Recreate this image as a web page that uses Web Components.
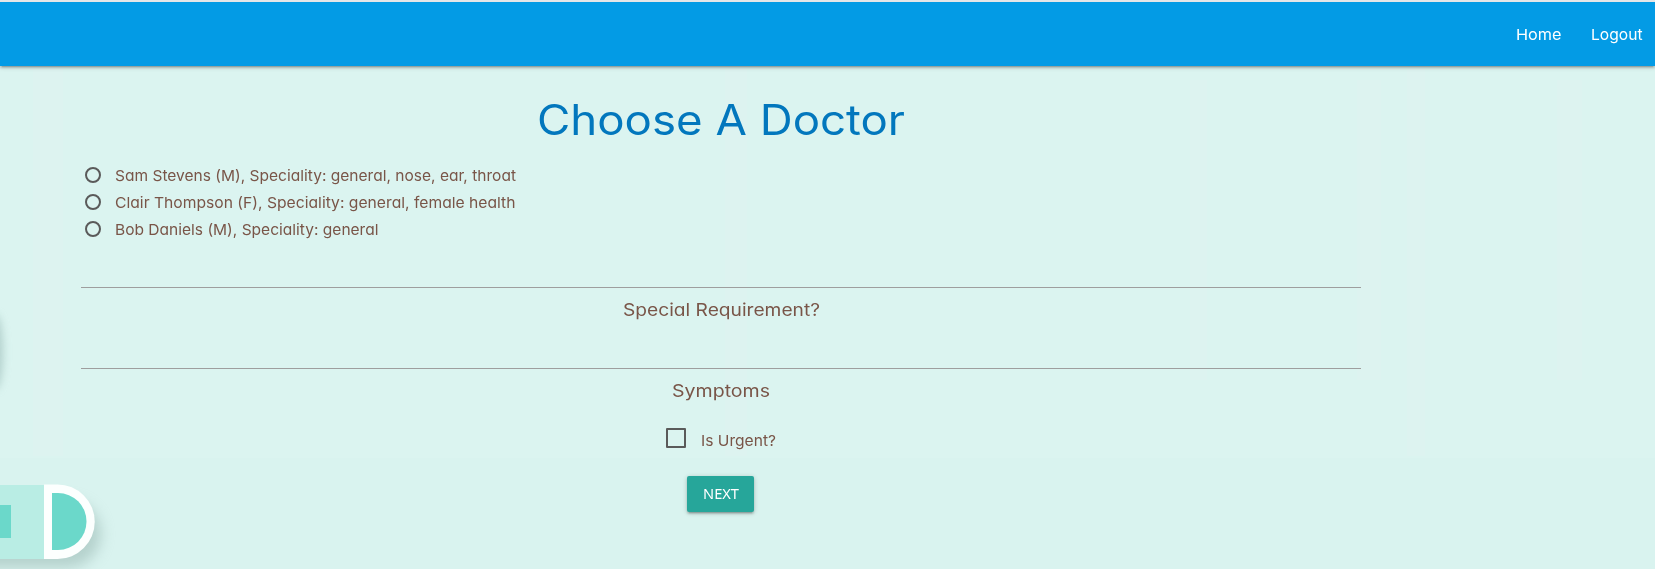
<!DOCTYPE html>
<html lang="en"><head><meta charset="utf-8"><title>Choose A Doctor</title>
<style>html,body{margin:0;height:100%;overflow:hidden}</style></head><body>
<doctor-page></doctor-page>
<script>
const define=(name,html,init)=>customElements.define(name,class extends HTMLElement{
  connectedCallback(){if(this.shadowRoot)return;this.attachShadow({mode:'open'}).innerHTML=html;if(init)init.call(this,this.shadowRoot);}
});
// Text stretched to fill the advance width given in its "w" attribute.
define('wide-text',`<style>:host{display:inline-block;white-space:nowrap;text-align:left}span{display:inline-block;transform-origin:0 50%}</style><span></span>`,function(r){
  const s=r.querySelector('span');s.textContent=this.getAttribute('text');
  const w=+this.getAttribute('w'),n=s.getBoundingClientRect().width;
  this.style.width=w+'px';
  s.style.transform='scaleX('+w/n+')';
});
define('nav-bar',`<style>:host{display:flex;justify-content:flex-end;box-sizing:border-box;height:66px;border-top:2px solid #e4e6e8;background:#039be5;color:#fff;font-size:15px;line-height:66px;padding-right:12.5px;gap:29.5px;position:relative;box-shadow:0 2px 2px 0 rgba(0,0,0,.14),0 3px 1px -2px rgba(0,0,0,.12),0 1px 5px 0 rgba(0,0,0,.2)}</style>
<wide-text text="Home" w="45.5"></wide-text><wide-text text="Logout" w="51.5"></wide-text>`);
define('doctor-option',`<style>:host{display:flex;align-items:center;height:27px;font-size:15px}i{box-sizing:border-box;width:16px;height:16px;border:2px solid #5a5a5a;border-radius:50%;margin:0 14px 1px 4px}</style><i></i><slot></slot>`);
define('text-field',`<style>:host{display:block;height:81px;text-align:center;font-size:17px}div{height:43px;border-bottom:1px solid #9e9e9e;box-sizing:border-box}p{margin:0;line-height:44px}</style><div></div><p><slot></slot></p>`);
define('check-box',`<style>:host{display:flex;justify-content:center;font-size:15px;line-height:26px;height:48px}i{box-sizing:border-box;width:20px;height:20px;border:2px solid #5a5a5a;border-radius:1px;margin-right:15px}</style><i></i><slot></slot>`);
define('raised-button',`<style>:host{display:block;width:67px;height:36px;margin:0 0 0 606px;background:#26a69a;color:#fff;border-radius:2px;text-align:center;font:14px/36px "Noto Sans",sans-serif;box-shadow:0 2px 2px 0 rgba(0,0,0,.14),0 3px 1px -2px rgba(0,0,0,.12),0 1px 5px 0 rgba(0,0,0,.2)}</style><slot></slot>`);
define('page-backdrop',`<style>:host{position:absolute;inset:0;overflow:hidden;background:#dbf4f0}svg{display:block}</style>
<svg width="1655" height="569"><defs><filter id="b" x="-50%" y="-50%" width="200%" height="200%"><feGaussianBlur stdDeviation="7"/></filter>
<filter id="s" x="-200%" y="-50%" width="500%" height="200%"><feGaussianBlur stdDeviation="4"/></filter></defs>
<path d="M0 458H1655V569H0Z" fill="#d9f3ef"/>
<g fill="#e2f2f0" opacity=".35"><path d="M1407 66h18v390h-18zM1557 80h25v300h-25zM1357 80h24v300h-24zM1190 80h17v300h-17zM725 66h22v390h-22zM33 66h30v390h-30z"/></g>
<ellipse cx="-5" cy="352" rx="8" ry="38" fill="#9dbdb9" opacity=".65" filter="url(#s)"/>
<path d="M-20 500H66A34 34 0 0 1 68 568H-20Z" fill="#91b0aa" opacity=".5" filter="url(#b)"/>
<path d="M0 485H46V559H0Z" fill="#b9ede4"/><path d="M0 505H11V538H0Z" fill="#6bd8ca"/>
<path d="M44 484.500H57.500A37 37 0 0 1 57.500 559H44Z" fill="#fcfffe"/><path d="M52 493H58A28.500 28.500 0 0 1 58 550H52Z" fill="#6bd8ca"/></svg>`);
define('doctor-page',`<style>:host{display:block;position:relative;height:569px;color:#795548;font-family:Inter,sans-serif;font-feature-settings:"cv11"}main{position:relative;width:1280px;margin-left:81px}h1{margin:0;padding-top:24px;height:72px;text-align:center;font-weight:400;font-size:42px;line-height:60px;color:#0277bd}section{height:83px}.gap{height:21px}</style>
<page-backdrop></page-backdrop><nav-bar></nav-bar><main><h1><wide-text text="Choose A Doctor" w="368"></wide-text></h1>
<section><doctor-option><wide-text text="Sam Stevens (M), Speciality: general, nose, ear, throat" w="401"></wide-text></doctor-option>
<doctor-option><wide-text text="Clair Thompson (F), Speciality: general, female health" w="400.5"></wide-text></doctor-option>
<doctor-option><wide-text text="Bob Daniels (M), Speciality: general" w="263.5"></wide-text></doctor-option></section>
<text-field><wide-text text="Special Requirement?" w="197"></wide-text></text-field>
<text-field><wide-text text="Symptoms" w="98"></wide-text></text-field><div class="gap"></div>
<check-box><wide-text text="Is Urgent?" w="75"></wide-text></check-box>
<raised-button><wide-text text="NEXT" w="36"></wide-text></raised-button></main>`);
</script></body></html>
